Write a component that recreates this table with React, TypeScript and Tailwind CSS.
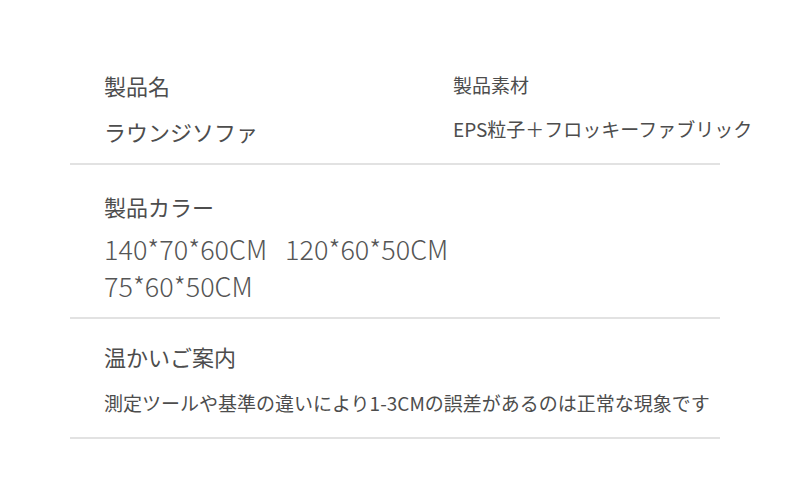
import React from "react";

const font = { fontFamily: '"Noto Sans CJK JP", "Noto Sans", sans-serif' };

export default function App() {
  return (
    <div className="w-[790px] h-[492px] bg-white" style={font}>
      <div className="pt-[70px] pl-[70px] w-[720px]">
        <div className="border-b-2 border-[#e2e2e2] pb-[17px]">
          <div className="flex">
            <div className="w-[383px] shrink-0 pl-[34px]">
              <div className="text-[22px] leading-[30px] text-[#4d4d4d]">製品名</div>
              <div className="mt-[16px] text-[22px] leading-[30px] text-[#4d4d4d]">ラウンジソファ</div>
            </div>
            <div className="whitespace-nowrap">
              <div className="text-[19px] leading-[30px] text-[#4d4d4d]">製品素材</div>
              <div className="mt-[14px] text-[19px] leading-[30px] text-[#4d4d4d]">EPS粒子＋フロッキーファブリック</div>
            </div>
          </div>
        </div>
        <div className="border-b-2 border-[#e2e2e2] pt-[26px] pb-[13px] pl-[34px]">
          <div className="text-[22px] leading-[30px] text-[#4d4d4d]">製品カラー</div>
          <div className="mt-[9px] text-[27px] leading-[37px] text-[#555] font-light whitespace-nowrap">
            <div>140*70*60CM&nbsp;&nbsp;&nbsp;120*60*50CM</div>
            <div>75*60*50CM</div>
          </div>
        </div>
        <div className="border-b-2 border-[#e2e2e2] pt-[22px] pb-[19px] pl-[34px]">
          <div className="text-[22px] leading-[30px] text-[#4d4d4d]">温かいご案内</div>
          <div className="mt-[17px] text-[19px] leading-[30px] text-[#4d4d4d] whitespace-nowrap">測定ツールや基準の違いにより1-3CMの誤差があるのは正常な現象です</div>
        </div>
      </div>
    </div>
  );
}
